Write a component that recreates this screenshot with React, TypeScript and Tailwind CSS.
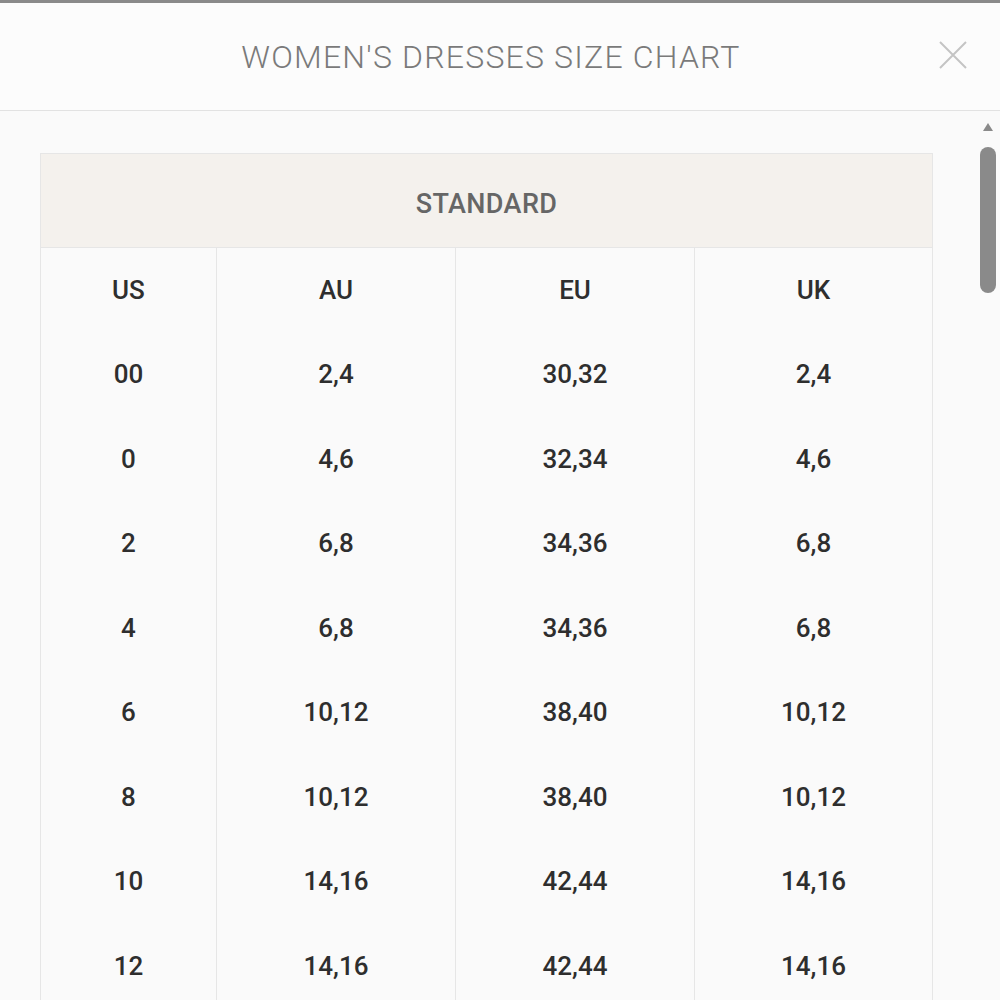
import React from "react";

const rows = [
  ["00", "2,4", "30,32", "2,4"],
  ["0", "4,6", "32,34", "4,6"],
  ["2", "6,8", "34,36", "6,8"],
  ["4", "6,8", "34,36", "6,8"],
  ["6", "10,12", "38,40", "10,12"],
  ["8", "10,12", "38,40", "10,12"],
  ["10", "14,16", "42,44", "14,16"],
  ["12", "14,16", "42,44", "14,16"],
];

export default function App() {
  return (
    <div className="w-[1000px] h-[1000px] overflow-hidden bg-[#fafafa] flex flex-col" style={{ fontFamily: "Roboto, 'Liberation Sans', sans-serif" }}>
      <div className="h-[3px] bg-[#8a8a8a] shrink-0" />
      <div className="h-[108px] shrink-0 flex items-center justify-center relative border-b border-[#e2e2e2] bg-[#fcfcfc]">
        <div className="text-[32px] font-light text-[#7a7a7a] tracking-[1.2px] -ml-[18px]">WOMEN'S DRESSES SIZE CHART</div>
        <svg className="absolute left-[938px] top-[37px]" width="30" height="30" viewBox="0 0 30 30">
          <path d="M2 2L28 28M28 2L2 28" stroke="#c4c4c4" strokeWidth="2" fill="none" />
        </svg>
      </div>
      <div className="flex-1 flex relative">
        <div className="pl-[40px] pt-[42px] w-[973px]">
          <div className="w-[893px] border border-[#e6e6e6]">
            <div className="h-[94px] bg-[#f4f1ed] border-b border-[#e6e6e6] flex items-center justify-center pt-[8px] text-[27px] font-medium tracking-[0.4px] text-[#666]">STANDARD</div>
            <div className="grid grid-cols-[176px_239px_239px_1fr] bg-[#fafafa]">
              {[["US", "AU", "EU", "UK"], ...rows].map((r, i) =>
                r.map((c, j) => (
                  <div key={i + "-" + j} className={"h-[84.5px] flex items-center justify-center text-[26px] font-medium text-[#2e2e2e] " + (j < 3 ? "border-r border-[#e6e6e6]" : "")}>
                    {c}
                  </div>
                ))
              )}
              {[0, 1, 2, 3].map((j) => (
                <div key={"e" + j} className={"h-[60px] " + (j < 3 ? "border-r border-[#e6e6e6]" : "")} />
              ))}
            </div>
          </div>
        </div>
        <div className="absolute left-[979px] top-[10px] w-[18px] flex flex-col items-center">
          <svg width="14" height="12" viewBox="0 0 14 12"><path d="M7 2L12 10H2Z" fill="#8a8a8a" /></svg>
          <div className="mt-[14px] w-[16px] h-[146px] rounded-full bg-[#8a8a8a]" />
        </div>
      </div>
    </div>
  );
}
